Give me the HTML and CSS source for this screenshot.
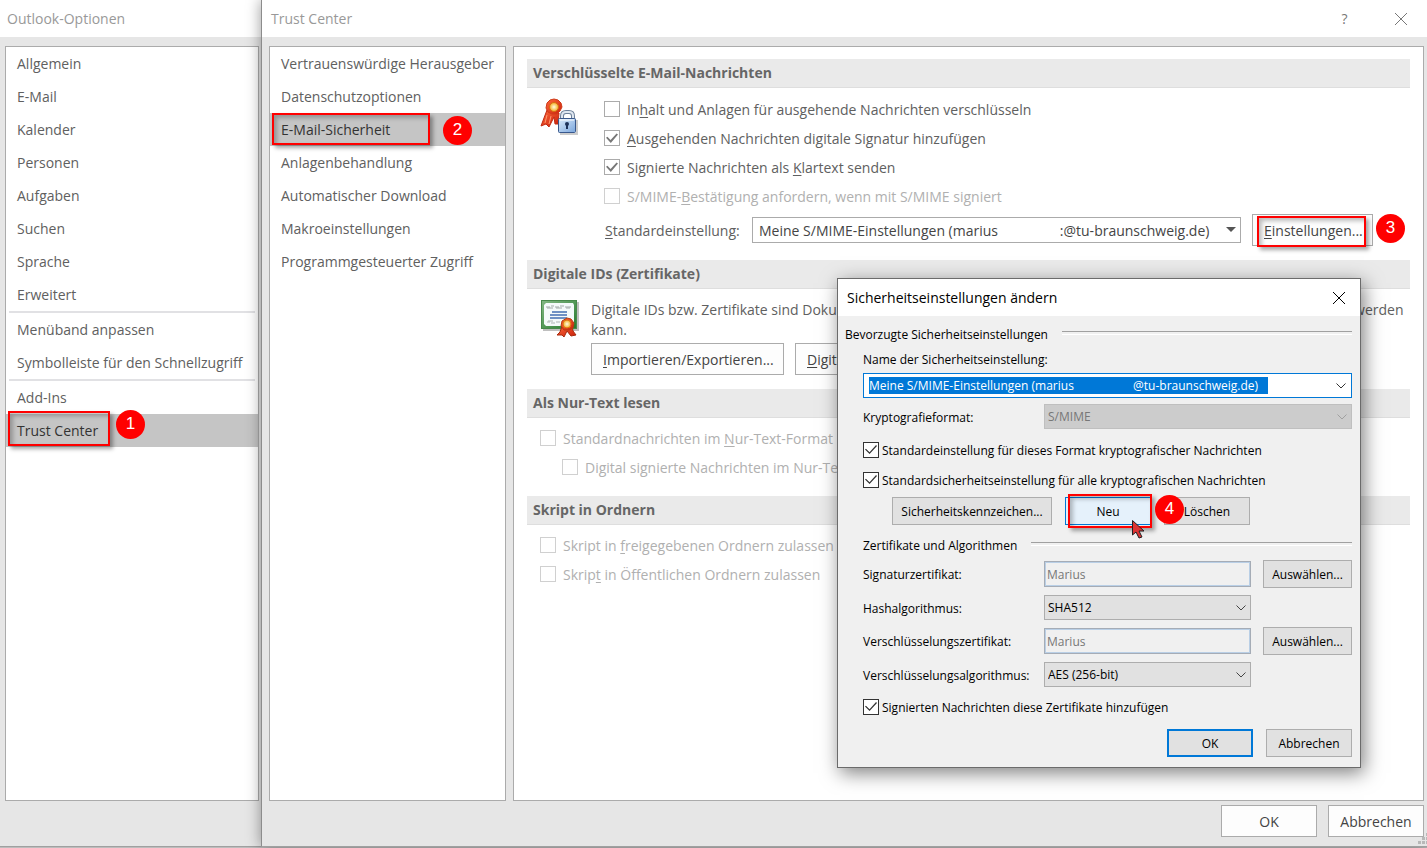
FILE: index.html
```html
<!DOCTYPE html>
<html lang="de">
<head>
<meta charset="utf-8">
<title>Trust Center</title>
<link rel="stylesheet" href="styles.css">
</head>
<body>
<div class="desktop">
  <section class="window options">
    <header class="titlebar"><h1>Outlook-Optionen</h1></header>
    <nav class="panel nav options-nav">
      <a href="#">Allgemein</a>
      <a href="#">E-Mail</a>
      <a href="#">Kalender</a>
      <a href="#">Personen</a>
      <a href="#">Aufgaben</a>
      <a href="#">Suchen</a>
      <a href="#">Sprache</a>
      <a href="#">Erweitert</a>
      <hr>
      <a href="#">Menüband anpassen</a>
      <a href="#">Symbolleiste für den Schnellzugriff</a>
      <hr>
      <a href="#">Add-Ins</a>
      <a href="#" class="active">Trust Center<span class="mark mark-one"></span><span class="badge badge-one">1</span></a>
    </nav>
  </section>

  <section class="window trust">
    <header class="titlebar">
      <h1>Trust Center</h1>
      <button class="title-btn help" type="button">?</button>
      <button class="title-btn" type="button" aria-label="Schließen">
        <svg width="12" height="12" viewBox="0 0 12 12"><path d="M0 0L12 12M12 0L0 12" stroke="#777" fill="none"/></svg>
      </button>
    </header>
    <div class="columns">
      <nav class="panel nav trust-nav">
        <a href="#">Vertrauenswürdige Herausgeber</a>
        <a href="#">Datenschutzoptionen</a>
        <a href="#" class="active">E-Mail-Sicherheit<span class="mark mark-two"></span><span class="badge badge-two">2</span></a>
        <a href="#">Anlagenbehandlung</a>
        <a href="#">Automatischer Download</a>
        <a href="#">Makroeinstellungen</a>
        <a href="#">Programmgesteuerter Zugriff</a>
      </nav>
      <main class="panel content">
        <section class="group">
          <h2>Verschlüsselte E-Mail-Nachrichten</h2>
          <div class="with-icon">
            <svg class="icon" width="40" height="40" viewBox="0 0 40 40">
              <defs>
                <linearGradient id="red" x1="0" y1="0" x2="1" y2="1"><stop offset="0" stop-color="#ff6a3c"/><stop offset="1" stop-color="#c91f0a"/></linearGradient>
                <linearGradient id="blue" x1="0" y1="0" x2="1" y2="1"><stop offset="0" stop-color="#dcecfb"/><stop offset="1" stop-color="#79a5dc"/></linearGradient>
                <radialGradient id="gold"><stop offset="0" stop-color="#fffbe0"/><stop offset="1" stop-color="#f3ae22"/></radialGradient>
              </defs>
              <path d="M7 12L4 20L1 28L6 26L9 29L12 23L14 19L15 26L18 26L19 15Z" fill="url(#red)" stroke="#c02a12"/>
              <path d="M7 17L5 25M11 18L9 26" stroke="#ff9a70" fill="none"/>
              <path d="M14 1L18 2L21 5L22 9L20 13L17 16L12 16L8 14L6 10L7 5L10 2Z" fill="url(#red)" stroke="#cf3a18"/>
              <circle cx="14" cy="9" r="4.500" fill="url(#gold)" stroke="#d66c13"/>
              <path d="M37 22V36H20" stroke="#00000033" stroke-width="2" fill="none"/>
              <path d="M22 22V18Q22 14 26 14H29Q33 14 33 18V22" fill="none" stroke="#6e819a" stroke-width="4"/>
              <path d="M22 22V18Q22 14 26 14H29Q33 14 33 18V22" fill="none" stroke="#dfe7f0" stroke-width="2"/>
              <rect x="18.500" y="20.500" width="17" height="14" rx="1" fill="url(#blue)" stroke="#39588c"/>
              <path d="M20 22H34" stroke="#fff"/>
              <circle cx="27" cy="26" r="2" fill="#1d3259"/><path d="M27 26V31" stroke="#1d3259" stroke-width="2"/>
            </svg>
            <div class="checks checks-main">
              <label><input type="checkbox"><span>In<u>h</u>alt und Anlagen für ausgehende Nachrichten verschlüsseln</span></label>
              <label><input type="checkbox" checked><span><u>A</u>usgehenden Nachrichten digitale Signatur hinzufügen</span></label>
              <label><input type="checkbox" checked><span>Signierte Nachrichten als <u>K</u>lartext senden</span></label>
              <label class="off"><input type="checkbox" disabled><span>S/MIME-<u>B</u>estätigung anfordern, wenn mit S/MIME signiert</span></label>
              <div class="default-row">
                <label for="default"><u>S</u>tandardeinstellung:</label>
                <div class="combo combo-large">
                  <select id="default"><option>Meine S/MIME-Einstellungen (marius&nbsp;&nbsp;&nbsp;&nbsp;&nbsp;&nbsp;&nbsp;&nbsp;&nbsp;&nbsp;&nbsp;&nbsp;&nbsp;&nbsp;&nbsp;&nbsp;&nbsp;:@tu-braunschweig.de)</option></select>
                  <svg width="10" height="5" viewBox="0 0 10 5"><path d="M0 0H10L5 5Z" fill="#555"/></svg>
                </div>
                <button class="btn settings" type="button"><u>E</u>instellungen...<span class="mark mark-three"></span><span class="badge badge-three">3</span></button>
              </div>
            </div>
          </div>
        </section>

        <section class="group">
          <h2>Digitale IDs (Zertifikate)</h2>
          <div class="with-icon ids">
            <svg class="icon" width="40" height="40" viewBox="0 0 40 40">
              <defs><linearGradient id="green" x1="0" y1="0" x2="1" y2="1"><stop offset="0" stop-color="#83b884"/><stop offset="1" stop-color="#247a2c"/></linearGradient></defs>
              <path d="M38 2V30H3" fill="none" stroke="#00000040" stroke-width="2"/>
              <rect x="1.500" y="0.500" width="35" height="28" fill="url(#green)" stroke="#47894b"/>
              <path d="M6 3H33L34 5V24L32 26H6L4 24V5Z" fill="#f4fafa"/>
              <path d="M6 7H10M11 6H14M15 7H19M20 6H24M25 7H31M7 8H13M16 8H22M26 8H30" stroke="#a3abaa"/>
              <path d="M12 12H27M10 15H27M10 18H27" stroke="#6f91c4" stroke-width="2"/>
              <path d="M7 22H10M11 23H15M16 22H20M8 21H13" stroke="#aeb6b5"/>
              <path d="M22 26L20 32L17 35L22 35L24 37L27 31L31 36L36 35L33 31L32 25Z" fill="url(#red)" stroke="#a92a0d"/>
              <path d="M27 18L31 19L34 23L33 28L29 30L24 30L21 26L22 21Z" fill="url(#red)" stroke="#b83b0c"/>
              <circle cx="27" cy="24" r="4" fill="url(#gold)" stroke="#df7612"/>
            </svg>
            <div class="ids-body">
              <p>Digitale IDs bzw. Zertifikate sind Dokumente, mit denen Ihre Identität in elektronischen Transaktionen nachgewiesen werden kann.</p>
              <div class="ids-buttons">
                <button class="btn" type="button"><u>I</u>mportieren/Exportieren...</button>
                <button class="btn" type="button"><u>D</u>igitale ID anfordern...</button>
              </div>
            </div>
          </div>
        </section>

        <section class="group">
          <h2>Als Nur-Text lesen</h2>
          <div class="checks plain">
            <label class="off"><input type="checkbox" disabled><span>Standardnachrichten im <u>N</u>ur-Text-Format</span></label>
            <label class="off nested"><input type="checkbox" disabled><span>Digital signierte Nachrichten im Nur-Text</span></label>
          </div>
        </section>

        <section class="group">
          <h2>Skript in Ordnern</h2>
          <div class="checks plain">
            <label class="off"><input type="checkbox" disabled><span>Skript in <u>f</u>reigegebenen Ordnern zulassen</span></label>
            <label class="off"><input type="checkbox" disabled><span>Skrip<u>t</u> in Öffentlichen Ordnern zulassen</span></label>
          </div>
        </section>
      </main>
    </div>
    <footer class="actions">
      <button class="btn" type="button">OK</button>
      <button class="btn" type="button">Abbrechen</button>
      <svg class="grip" width="9" height="11" viewBox="0 0 9 11" fill="#b8b8b8"><path d="M8 0h3v3h-3zM4 4h3v3h-3zM8 4h3v3h-3zM0 8h3v3h-3zM4 8h3v3h-3zM8 8h3v3h-3z"/></svg>
    </footer>
  </section>

  <section class="dialog" role="dialog" aria-labelledby="dialog-title">
    <header class="dialog-title">
      <h2 id="dialog-title">Sicherheitseinstellungen ändern</h2>
      <button type="button" aria-label="Schließen"><svg width="12" height="12" viewBox="0 0 12 12"><path d="M0 0L12 12M12 0L0 12" stroke="#000" fill="none"/></svg></button>
    </header>
    <form class="dialog-body">
      <h3>Bevorzugte Sicherheitseinstellungen</h3>
      <div class="preferred">
        <label class="name-label" for="setting">Name der Sicherheitseinstellung:</label>
        <div class="name-box">
          <input id="setting" type="text" value="Meine S/MIME-Einstellungen (marius&nbsp;&nbsp;&nbsp;&nbsp;&nbsp;&nbsp;&nbsp;&nbsp;&nbsp;&nbsp;&nbsp;&nbsp;&nbsp;&nbsp;&nbsp;&nbsp;&nbsp;&nbsp;&nbsp;@tu-braunschweig.de)">
          <svg width="10" height="6" viewBox="0 0 10 6"><path d="M0.500 0.500L5 5L9.500 0.500" stroke="#333" fill="none"/></svg>
        </div>
        <div class="format">
          <label for="format">Kryptografieformat:</label>
          <div class="combo"><select id="format" disabled><option>S/MIME</option></select><svg width="10" height="6" viewBox="0 0 10 6"><path d="M0.500 0.500L5 5L9.500 0.500" stroke="#a0a0a0" fill="none"/></svg></div>
        </div>
        <label class="tick"><input type="checkbox" checked><span>Standardeinstellung für dieses Format kryptografischer Nachrichten</span></label>
        <label class="tick"><input type="checkbox" checked><span>Standardsicherheitseinstellung für alle kryptografischen Nachrichten</span></label>
        <div class="edit-buttons">
          <button class="dbtn wide" type="button">Sicherheitskennzeichen...</button>
          <button class="dbtn hot" type="button">Neu<span class="mark mark-four"></span><span class="badge badge-four">4</span>
            <svg class="pointer" width="13" height="19" viewBox="0 0 13 19"><path d="M0.500 0.500V15L4 12L7 18L10 17L7 11H12Z" fill="#dc3434" stroke="#222"/></svg>
          </button>
          <button class="dbtn" type="button">Löschen</button>
        </div>
      </div>
      <h3 class="indent">Zertifikate und Algorithmen</h3>
      <div class="certs">
        <label for="sig">Signaturzertifikat:</label>
        <input id="sig" class="field" type="text" value="Marius" disabled>
        <button class="dbtn" type="button">Auswählen...</button>
        <label for="hash">Hashalgorithmus:</label>
        <div class="combo"><select id="hash"><option>SHA512</option></select><svg width="10" height="6" viewBox="0 0 10 6"><path d="M0.500 0.500L5 5L9.500 0.500" stroke="#444" fill="none"/></svg></div>
        <label for="enc">Verschlüsselungszertifikat:</label>
        <input id="enc" class="field" type="text" value="Marius" disabled>
        <button class="dbtn" type="button">Auswählen...</button>
        <label for="alg">Verschlüsselungsalgorithmus:</label>
        <div class="combo"><select id="alg"><option>AES (256-bit)</option></select><svg width="10" height="6" viewBox="0 0 10 6"><path d="M0.500 0.500L5 5L9.500 0.500" stroke="#444" fill="none"/></svg></div>
      </div>
      <label class="tick last"><input type="checkbox" checked><span>Signierten Nachrichten diese Zertifikate hinzufügen</span></label>
      <div class="dialog-actions">
        <button class="dbtn primary" type="button">OK</button>
        <button class="dbtn" type="button">Abbrechen</button>
      </div>
    </form>
  </section>
</div>
</body>
</html>
```
FILE: styles.css
```css
* { box-sizing: border-box; }
body { margin: 0; background: #bcbcbc; font: 14px/20px "Open Sans", "Noto Sans", sans-serif; color: #606060; }
h1, h2, h3, p { margin: 0; font: inherit; }
button, input, select { font: inherit; color: inherit; margin: 0; border-radius: 0; }
a { color: inherit; text-decoration: none; }
u { text-underline-offset: 2px; }

.desktop { position: relative; display: flex; min-height: 100vh; padding-bottom: 1px; }
.window { display: flex; flex-direction: column; background: #e6e6e6; border-bottom: 1px solid #a0a0a0; }
.options { width: 261px; flex: none; }
.trust { position: relative; flex: 1; min-width: 0; border-left: 1px solid #8c8c8c; box-shadow: 0 0 14px rgba(0, 0, 0, .4); }

.titlebar { display: flex; align-items: center; height: 37px; padding-left: 7px; background: #fff; color: #999; }
.trust .titlebar { padding-left: 9px; }
.titlebar h1 { flex: 1; }
.title-btn { display: flex; align-items: center; justify-content: center; width: 52px; height: 36px; padding: 0; border: 0; background: none; color: #777; }
.help { width: 61px; }

.panel { background: #fff; border: 1px solid #ababab; }
.options-nav { flex: 1; margin: 9px 2px 45px 5px; }
.nav a { position: relative; display: block; padding: 0 11px; line-height: 33px; white-space: nowrap; }
.nav .active { background: #c5c5c5; color: #333; }
.nav hr { height: 2px; margin: 0 3px; border: 0; background: #e1e1e4; }

.columns { display: flex; flex: 1; gap: 7px; padding: 9px 3px 0 7px; }
.trust-nav { width: 237px; flex: none; }
.content { flex: 1; min-width: 0; padding: 12px 13px; }

.group { margin-bottom: 14px; }
.group h2 { height: 29px; padding-left: 6px; border-bottom: 1px solid #dedede; background: #eaeaea; color: #666; font-weight: 700; line-height: 28px; }
.with-icon { display: flex; align-items: flex-start; padding: 7px 0 0 13px; }
.icon { flex: none; margin: 3px 24px 0 0; }
.checks { flex: 1; }
.plain { padding: 6px 0 0 13px; }
.checks > label { display: flex; align-items: center; gap: 7px; height: 29px; white-space: nowrap; }
.checks .off { color: #b0b0b0; }
.checks .nested { padding-left: 22px; }

input[type="checkbox"] { appearance: none; display: grid; place-items: center; flex: none; width: 16px; height: 16px; margin: 0 0 1px; border: 1px solid #ababab; background: #fff; }
input[type="checkbox"]:disabled { border-color: #d0d0d0; }
input[type="checkbox"]:checked::before { content: ""; width: 12px; height: 10px; background: #777; clip-path: polygon(0 48%, 12% 38%, 38% 70%, 88% 4%, 100% 14%, 40% 100%); }

.default-row { display: flex; align-items: center; margin-top: 3px; padding-right: 37px; }
.default-row > label { width: 148px; flex: none; padding: 1px 0 0 1px; }
.combo { position: relative; }
.combo select { display: block; appearance: none; width: 100%; height: 25px; padding: 1px 3px 0; border: 1px solid #adadad; background: #e1e1e1; opacity: 1; }
.combo svg { position: absolute; right: 5px; top: 50%; margin-top: -3px; pointer-events: none; }
.combo select:disabled { background: #ccc; border-color: #bfbfbf; color: #777; }
.combo-large { flex: 1; min-width: 0; }
.combo-large select { height: 26px; padding: 2px 6px 0; border-color: #ababab; background: #fff; color: #444; }

.btn { position: relative; height: 32px; padding: 1px 11px 0; border: 1px solid #ababab; background: #fdfdfd; color: #444; white-space: nowrap; }
.settings { width: 121px; margin-left: 11px; }
.ids { padding-top: 11px; }
.ids .icon { margin: 0 11px 0 0; }
.ids-body { flex: 1; min-width: 0; }
.ids-buttons { display: flex; gap: 11px; margin-top: 3px; }
.ids-buttons .btn:first-child { width: 193px; }

.actions { position: relative; display: flex; justify-content: flex-end; gap: 11px; height: 45px; padding: 4px 3px 0 0; }
.actions .btn { width: 96px; }
.grip { position: absolute; right: 0; bottom: 2px; }

.mark { position: absolute; border: 2px solid #f00; box-shadow: 3px 3px 4px rgba(0, 0, 0, .35), inset 3px 3px 4px rgba(0, 0, 0, .25); pointer-events: none; }
.badge { position: absolute; z-index: 1; width: 29px; height: 29px; border-radius: 50%; background: #f00; color: #fff; font: 17px/28px "Liberation Sans", sans-serif; text-align: center; }
.mark-one { left: 2px; top: -3px; width: 102px; height: 35px; }
.badge-one { left: 110px; top: -4px; }
.mark-two { left: 2px; top: 0; width: 158px; height: 32px; }
.badge-two { left: 173px; top: 3px; }
.mark-three { left: 4px; top: 1px; width: 109px; height: 31px; }
.badge-three { left: 123px; top: -1px; }
.mark-four { left: 2px; top: -4px; width: 84px; height: 34px; }
.badge-four { left: 89px; top: -3px; }
.pointer { position: absolute; left: 66px; top: 22px; z-index: 2; }

.dialog { position: absolute; z-index: 3; left: 837px; top: 278px; width: 524px; border: 1px solid #6b6b6b; background: #f0f0f0; color: #000; font-size: 12px; line-height: 16px; box-shadow: 3px 5px 18px rgba(0, 0, 0, .5); }
.dialog-title { display: flex; align-items: center; justify-content: space-between; height: 37px; padding: 0 14px 0 9px; background: #fff; font-size: 14px; }
.dialog-title button { display: flex; padding: 1px; border: 0; background: none; }
.dialog-body { padding: 11px 8px 10px 7px; }
.dialog h3 { display: flex; gap: 14px; height: 16px; }
.dialog h3::after { content: ""; flex: 1; height: 2px; margin-top: 4px; border-top: 1px solid #a0a0a0; border-bottom: 1px solid #fff; }
.dialog .indent { margin: 13px 0 6px 18px; }
.preferred { padding-left: 18px; }
.name-label { display: block; margin: 9px 0 5px; }
.name-box { display: flex; align-items: center; justify-content: space-between; height: 25px; padding: 0 5px; border: 1px solid #0078d7; background: #fff; }
.name-box input { width: 399px; height: 17px; padding: 0; border: 0; background: #0078d7; color: #fff; }
.format { display: grid; grid-template-columns: 181px 1fr; align-items: center; margin: 6px 0; }
.format label, .certs label, .tick span { padding-top: 2px; }
.tick { display: flex; align-items: center; gap: 3px; height: 30px; }
.tick input[type="checkbox"] { border-color: #333; }
.tick input[type="checkbox"]:checked::before { background: #333; clip-path: polygon(0 50%, 8% 42%, 38% 78%, 92% 6%, 100% 14%, 38% 96%); }
.edit-buttons { display: flex; gap: 13px; margin: 2px 0 0 29px; }
.dbtn { position: relative; width: 86px; height: 28px; padding: 2px 0 0; border: 1px solid #adadad; background: #e1e1e1; white-space: nowrap; }
.dbtn.wide { width: 160px; }
.dbtn.hot { z-index: 1; border-color: #0078d7; background: #e5f1fb; }
.dbtn.primary { border: 2px solid #0078d7; }
.certs { display: grid; grid-template-columns: 181px 1fr 89px; row-gap: 6px; align-items: center; padding-left: 18px; }
.certs label { grid-column: 1; white-space: nowrap; }
.certs .field, .certs .combo { grid-column: 2; margin-right: 12px; }
.certs .dbtn { width: 89px; }
.certs .combo { margin-top: 1px; margin-bottom: 1px; }
.field { min-width: 0; height: 26px; padding: 0 2px; border: 1px solid #a5acb6; background: #f0f0f0; color: #777; box-shadow: inset 0 0 0 1px #b9cfe6; }
.last { margin: 4px 0 7px 18px; }
.dialog-actions { display: flex; justify-content: flex-end; gap: 13px; }
```
